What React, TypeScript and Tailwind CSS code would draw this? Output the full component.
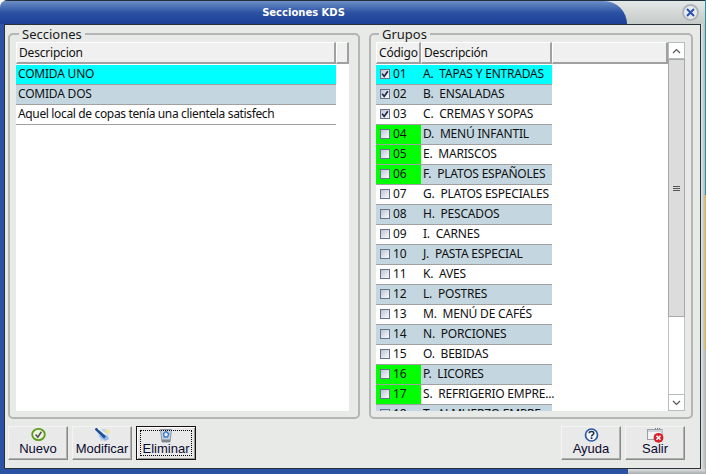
const grupos: [string, string, boolean, boolean][] = [
  ["01", "A.  TAPAS Y ENTRADAS", true, false],
  ["02", "B.  ENSALADAS", true, false],
  ["03", "C.  CREMAS Y SOPAS", true, false],
  ["04", "D.  MENÚ INFANTIL", false, true],
  ["05", "E.  MARISCOS", false, true],
  ["06", "F.  PLATOS ESPAÑOLES", false, true],
  ["07", "G.  PLATOS ESPECIALES", false, false],
  ["08", "H.  PESCADOS", false, false],
  ["09", "I.  CARNES", false, false],
  ["10", "J.  PASTA ESPECIAL", false, false],
  ["11", "K.  AVES", false, false],
  ["12", "L.  POSTRES", false, false],
  ["13", "M.  MENÚ DE CAFÉS", false, false],
  ["14", "N.  PORCIONES", false, false],
  ["15", "O.  BEBIDAS", false, false],
  ["16", "P.  LICORES", false, true],
  ["17", "S.  REFRIGERIO EMPRE...", false, true],
  ["18", "T.  ALMUERZO EMPRE...", false, false],
];

function HeaderCell({ w, children, grow }: { w?: string; children?: React.ReactNode; grow?: boolean }) {
  return (
    <div
      className={`${w ?? ""} ${grow ? "flex-1" : "shrink-0"} h-[22px] flex items-center pl-[2px] bg-[#f0f0f0] border-t border-l border-t-white border-l-white border-r-2 border-b-2 border-r-[#a0a0a0] border-b-[#a0a0a0] text-[12px] tracking-[-0.2px] text-[#101010] whitespace-pre`}
    >
      {children}
    </div>
  );
}

function Row({ bg, children }: { bg: string; children: React.ReactNode }) {
  return <div className={`${bg} h-[20px] border-b border-[#a0a0a0] flex items-center`}>{children}</div>;
}

function Check({ on }: { on: boolean }) {
  return (
    <svg width="10" height="10" viewBox="0 0 10 10" className="shrink-0">
      <defs>
        <linearGradient id="cb" x1="0" y1="0" x2="1" y2="1">
          <stop offset="0" stopColor="#b8bfcf" />
          <stop offset="1" stopColor="#ffffff" />
        </linearGradient>
      </defs>
      <rect x="0.5" y="0.5" width="9" height="9" fill="url(#cb)" stroke="#66738e" />
      {on && <path d="M2.2 4.8 L4.2 7.4 L7.8 2.2" fill="none" stroke="#1f2a44" strokeWidth="1.7" />}
    </svg>
  );
}

function IconNuevo() {
  return (
    <svg width="15" height="13" viewBox="0 0 15 13">
      <ellipse cx="7.5" cy="6.5" rx="6.3" ry="5.6" fill="#eef5df" stroke="#5c9a1e" strokeWidth="1.8" />
      <path d="M4.6 6.6 L6.8 9.2 L10.4 3.8" fill="none" stroke="#555" strokeWidth="1.6" />
    </svg>
  );
}
function IconModificar() {
  return (
    <svg width="15" height="14" viewBox="0 0 15 14">
      <path d="M1 2 L11 1 L14 11 L6 13 Z" fill="#bcd6f2" />
      <path d="M4 8 L10 13 L14 11 L11 6 Z" fill="#8fb6e4" />
      <path d="M0.5 0.5 L10 9.5" stroke="#1f4d92" strokeWidth="2.6" />
      <path d="M3 0.5 L12 7" stroke="#f5f8fc" strokeWidth="1.1" />
      <circle cx="12.5" cy="3.5" r="2" fill="#f5e878" />
    </svg>
  );
}
function IconEliminar() {
  return (
    <svg width="14" height="15" viewBox="0 0 14 15">
      <path d="M1.5 1.5 H12.5 L11 14 H3 Z" fill="#c8d2de" stroke="#8e98a4" />
      <path d="M4.5 5.5 L7 3.5 L9.8 6 L8.5 9 L5.2 9 Z" fill="#e8eef6" stroke="#3f7fd0" strokeWidth="1.5" />
      <rect x="3" y="11.5" width="8" height="2.5" fill="#7f858c" />
    </svg>
  );
}
function IconAyuda() {
  return (
    <svg width="15" height="14" viewBox="0 0 15 14">
      <circle cx="7.5" cy="7" r="6" fill="#f4f7fc" stroke="#2c5aa8" strokeWidth="1.7" />
      <path d="M5.2 5.2 C5.2 2.9 9.8 2.9 9.8 5.2 C9.8 6.8 7.5 6.8 7.5 8.4" fill="none" stroke="#26303f" strokeWidth="1.5" />
      <rect x="6.7" y="9.3" width="1.7" height="1.7" fill="#26303f" />
    </svg>
  );
}
function IconSalir() {
  return (
    <svg width="17" height="15" viewBox="0 0 17 15">
      <rect x="0.5" y="1.5" width="14.5" height="10" fill="#f2f3f5" stroke="#9aa0a8" />
      <rect x="1" y="2" width="13.5" height="2" fill="#cfd4dc" />
      <path d="M8 0.5 h1 M10 0.5 h1 M12 0.5 h1" stroke="#777" />
      <circle cx="11.5" cy="9.8" r="4.9" fill="#d8202c" />
      <path d="M9.5 7.8 L13.5 11.8 M13.5 7.8 L9.5 11.8" stroke="#fff" strokeWidth="1.5" />
    </svg>
  );
}

function Btn({ icon, label, focus }: { icon: React.ReactNode; label: string; focus?: boolean }) {
  return (
    <button
      className={`w-[60px] h-[34px] relative flex flex-col items-center bg-[#e8e9e8] text-[13px] leading-[15px] text-[#0a0a30] ${
        focus
          ? "border border-[#1a1010] shadow-[inset_1px_1px_0_#fff,inset_-1px_-1px_0_#9a9a9a]"
          : "border border-t-[#f4f4f4] border-l-[#f4f4f4] border-r-[#8a8a8a] border-b-[#8a8a8a] shadow-[inset_-1px_-1px_0_#b0b0b0]"
      }`}
    >
      <span className="h-[14px] pt-[1px] flex items-start">{icon}</span>
      <span>{label}</span>
      {focus && <span className="absolute inset-[3px] border border-dotted border-black" />}
    </button>
  );
}

function Group({ title, w, pad, legend, children }: { title: string; w: string; pad: string; legend: string; children: React.ReactNode }) {
  return (
    <div className={`${w} ${pad} h-[386px] relative rounded-[5px] border-2 border-[#b4b6b6] bg-[#e8eae8] pt-[7px]`}>
      <span className={`${legend} absolute -top-[9px] px-[3px] bg-[#e8eae8] text-[13px] leading-[16px] text-[#1a1a1a]`}>{title}</span>
      {children}
    </div>
  );
}

export default function App() {
  return (
    <div
      className="w-[706px] h-[474px] overflow-hidden flex"
      style={{ fontFamily: '"Noto Sans", sans-serif' }}
    >
      <div className="w-[705px] h-full flex flex-col bg-[#2c52a4] rounded-tl-[8px] overflow-hidden">
        <div className="h-[24px] shrink-0 relative bg-gradient-to-b from-[#e4e8e6] to-[#c4cac8] border-t border-[#20303c]">
          <div
            className="w-[627px] h-full rounded-tr-[24px] bg-gradient-to-b from-[#6f8fc6] via-[#2c52a4] to-[#1d3f96] pr-[20px] flex items-center justify-center text-white text-[10px] font-bold"
            style={{ fontFamily: '"DejaVu Sans", sans-serif' }}
          >
            Secciones KDS
          </div>
          <div className="absolute left-[682px] top-[3px] w-[17px] h-[17px] rounded-full bg-[#e8ecf0] border-2 border-[#b0b4b8] flex items-center justify-center">
            <svg width="9" height="9" viewBox="0 0 9 9">
              <path d="M1 1 L8 8 M8 1 L1 8" stroke="#2a50b0" strokeWidth="2" />
            </svg>
          </div>
        </div>
        <div className="flex-1 flex min-h-0 pl-[4px]">
          <div className="w-[697px] bg-[#e8eae8] border border-[#283038] flex flex-col">
            <div className="flex gap-[9px] pl-[3px] pt-[8px]">
              <Group title="Secciones" w="w-[352px]" pad="pl-[6px]" legend="left-[9px]">
                <div className="w-[333px] h-[369px] bg-white">
                  <div className="flex mb-[1px]">
                    <HeaderCell w="w-[320px]">Descripcion</HeaderCell>
                    <HeaderCell w="w-[13px]" />
                  </div>
                  <div className="w-[320px] text-[12px] text-[#101010] tracking-[-0.2px]">
                    <Row bg="bg-[#00ffff]"><span className="pl-[2px] pb-[2px] whitespace-pre">COMIDA UNO</span></Row>
                    <Row bg="bg-[#c4d7e0]"><span className="pl-[2px] pb-[2px] whitespace-pre">COMIDA DOS</span></Row>
                    <Row bg="bg-white"><span className="pl-[2px] pb-[2px] whitespace-pre tracking-[-0.35px]">Aquel local de copas tenía una clientela satisfech</span></Row>
                  </div>
                </div>
              </Group>
              <Group title="Grupos" w="w-[324px]" pad="pl-[5px]" legend="left-[8px]">
                <div className="w-[309px] h-[369px] flex">
                  <div className="w-[292px] h-full bg-white overflow-hidden">
                    <div className="flex mb-[1px]">
                      <HeaderCell w="w-[45px]">Código</HeaderCell>
                      <HeaderCell w="w-[131px]">Descripción</HeaderCell>
                      <HeaderCell grow />
                    </div>
                    <div className="w-[176px] text-[12px] text-[#101010] tracking-[-0.2px]">
                      {grupos.map(([c, d, on, green], i) => (
                        <Row key={c} bg={i === 0 ? "bg-[#00ffff]" : i % 2 === 1 ? "bg-[#c4d7e0]" : "bg-white"}>
                          <div className={`w-[45px] h-full shrink-0 flex items-center gap-[3px] pl-[4px] pb-[2px] ${green ? "bg-[#00ff00]" : ""}`}>
                            <Check on={on} />
                            <span>{c}</span>
                          </div>
                          <span className="pl-[2px] pb-[2px] whitespace-pre">{d}</span>
                        </Row>
                      ))}
                    </div>
                  </div>
                  <div className="w-[17px] h-full bg-white flex flex-col">
                    <div className="h-[17px] shrink-0 bg-white border border-[#b8bcbc] flex items-center justify-center">
                      <svg width="9" height="6" viewBox="0 0 9 6"><path d="M1 5 L4.5 1.5 L8 5" fill="none" stroke="#555" strokeWidth="1.2" /></svg>
                    </div>
                    <div className="h-[258px] shrink-0 bg-[#dcdcdc] border border-[#a8a8a8] flex flex-col gap-[1px] items-center justify-center">
                      <div className="w-[7px] h-[1px] bg-[#555]" />
                      <div className="w-[7px] h-[1px] bg-[#555]" />
                      <div className="w-[7px] h-[1px] bg-[#555]" />
                    </div>
                    <div className="flex-1 border-l border-r border-[#c0c4c4]" />
                    <div className="h-[17px] shrink-0 bg-white border border-[#b8bcbc] flex items-center justify-center">
                      <svg width="9" height="6" viewBox="0 0 9 6"><path d="M1 1 L4.5 4.5 L8 1" fill="none" stroke="#555" strokeWidth="1.2" /></svg>
                    </div>
                  </div>
                </div>
              </Group>
            </div>
            <div className="flex pl-[3px] pr-[15px] pt-[7px] items-start" style={{ fontFamily: '"Liberation Sans", sans-serif' }}>
              <div className="flex gap-[4px]">
                <Btn icon={<IconNuevo />} label="Nuevo" />
                <Btn icon={<IconModificar />} label="Modificar" />
                <Btn icon={<IconEliminar />} label="Eliminar" focus />
              </div>
              <div className="flex gap-[4px] ml-auto">
                <Btn icon={<IconAyuda />} label="Ayuda" />
                <Btn icon={<IconSalir />} label="Salir" />
              </div>
            </div>
          </div>
          <div className="flex-1 bg-gradient-to-r from-[#e4e6e6] to-[#b8bcbc]" />
        </div>
        <div className="h-[5px] shrink-0 flex">
          <div className="w-[628px] bg-[#2c52a4]" />
          <div className="flex-1 bg-gradient-to-b from-[#e0e2e2] to-[#a8acac]" />
        </div>
      </div>
      <div className="w-[1px] h-full bg-[#2a8ea8] flex flex-col">
        <div className="h-[195px]" />
        <div className="h-[155px] bg-[#e8b030]" />
        <div className="flex-1 bg-[#b0b4b4]" />
      </div>
    </div>
  );
}
